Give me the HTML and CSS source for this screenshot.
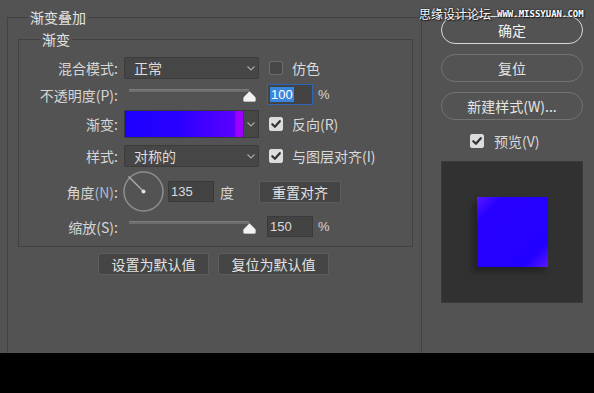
FILE: index.html
```html
<!DOCTYPE html>
<html lang="zh-CN">
<head>
<meta charset="utf-8">
<title>渐变叠加</title>
<link rel="stylesheet" href="styles.css">
</head>
<body>
<div class="dialog">
  <fieldset class="group outer">
    <legend>渐变叠加</legend>
    <fieldset class="group inner">
      <legend>渐变</legend>

      <div class="row r-blend">
        <span class="label">混合模式:</span>
        <div class="select"><span>正常</span><svg class="chev" width="8" height="5" viewBox="0 0 8 5"><polyline points="0.5,0.5 4,4 7.5,0.5"/></svg></div>
        <span class="check"></span>
        <span class="opt">仿色</span>
      </div>

      <div class="row r-opacity">
        <span class="label">不透明度(P):</span>
        <div class="slider"><span class="track"></span><svg class="thumb" width="13" height="11" viewBox="0 0 13 11"><path d="M6.5 0.5 L12 6 Q12.5 6.5 12.5 7.5 L12.5 9.5 Q12.5 10.5 11.5 10.5 L1.5 10.5 Q0.5 10.5 0.5 9.5 L0.5 7.5 Q0.5 6.5 1 6 Z"/></svg></div>
        <div class="field focus"><span class="sel">100</span></div>
        <span class="unit">%</span>
      </div>

      <div class="row r-gradient">
        <span class="label">渐变:</span>
        <div class="gradient"><span class="ramp"></span><span class="drop"><svg class="chev" width="8" height="5" viewBox="0 0 8 5"><polyline points="0.5,0.5 4,4 7.5,0.5"/></svg></span></div>
        <span class="check on"><svg width="14" height="14" viewBox="0 0 14 14"><path d="M3.3 7.2 L5.9 9.8 L10.8 4.2"/></svg></span>
        <span class="opt">反向(R)</span>
      </div>

      <div class="row r-style">
        <span class="label">样式:</span>
        <div class="select"><span>对称的</span><svg class="chev" width="8" height="5" viewBox="0 0 8 5"><polyline points="0.5,0.5 4,4 7.5,0.5"/></svg></div>
        <span class="check on"><svg width="14" height="14" viewBox="0 0 14 14"><path d="M3.3 7.2 L5.9 9.8 L10.8 4.2"/></svg></span>
        <span class="opt">与图层对齐(I)</span>
      </div>

      <div class="row r-angle">
        <span class="label">角度<span class="key">(N)</span>:</span>
        <svg class="dial" width="41" height="41" viewBox="0 0 41 41"><circle cx="20.5" cy="20.5" r="19.5"/><line x1="20.5" y1="20.5" x2="5.5" y2="5.5"/><circle class="pin" cx="20.5" cy="20.5" r="2"/></svg>
        <div class="field angle-field">135</div>
        <span class="deg">度</span>
        <button class="flat align-btn">重置对齐</button>
      </div>

      <div class="row r-scale">
        <span class="label">缩放(S):</span>
        <div class="slider"><span class="track"></span><svg class="thumb" width="13" height="11" viewBox="0 0 13 11"><path d="M6.5 0.5 L12 6 Q12.5 6.5 12.5 7.5 L12.5 9.5 Q12.5 10.5 11.5 10.5 L1.5 10.5 Q0.5 10.5 0.5 9.5 L0.5 7.5 Q0.5 6.5 1 6 Z"/></svg></div>
        <div class="field">150</div>
        <span class="unit">%</span>
      </div>
    </fieldset>

    <div class="defaults">
      <button class="flat wide">设置为默认值</button>
      <button class="flat wide">复位为默认值</button>
    </div>
  </fieldset>

  <aside class="side">
    <button class="pill primary">确定</button>
    <button class="pill">复位</button>
    <button class="pill">新建样式(W)...</button>
    <div class="preview-toggle">
      <span class="check on"><svg width="14" height="14" viewBox="0 0 14 14"><path d="M3.3 7.2 L5.9 9.8 L10.8 4.2"/></svg></span>
      <span class="opt">预览(V)</span>
    </div>
    <div class="preview"><span class="swatch"></span></div>
  </aside>

  <div class="watermark"><span class="wm-cn">思缘设计论坛</span><span class="wm-en">WWW.MISSYUAN.COM</span></div>
</div>
</body>
</html>
```

FILE: styles.css
```css
* { box-sizing: border-box; }
html, body { margin: 0; padding: 0; }
body {
  width: 594px;
  height: 393px;
  overflow: hidden;
  background: #000;
  font-family: "Noto Sans CJK SC", "Noto Sans", sans-serif;
  font-size: 14px;
  color: #d6d6d6;
}
.dialog {
  position: relative;
  display: flex;
  align-items: flex-start;
  height: 353px;
  background: #535353;
  overflow: hidden;
}

/* group boxes */
.group {
  margin: 0;
  padding: 0;
  min-width: 0;
  border: 1px solid #424242;
}
.group > legend {
  padding: 0 2px;
  height: 16px;
  line-height: 16px;
  color: #e4e4e4;
}
.outer {
  flex: none;
  width: 415px;
  height: 420px;
  margin: 9px 0 0 7px;
  padding: 0 8px 0 10px;
}
.outer > legend { margin-left: 10px; }
.inner {
  width: 395px;
  height: 216px;
  margin-top: 6px;
  padding: 9px 0 0 0;
}
.inner > legend { margin-left: 21px; }

/* rows */
.row { display: flex; align-items: center; }
.r-blend { height: 24px; }
.r-opacity { height: 29px; }
.r-gradient { height: 30px; }
.r-style { height: 34px; }
.r-angle { height: 37px; }
.r-scale { height: 33px; }
.label {
  flex: none;
  width: 99px;
  margin-right: 6px;
  text-align: right;
  white-space: nowrap;
}
.key { color: #a9bbd4; }

.select {
  flex: none;
  width: 135px;
  height: 22px;
  display: flex;
  align-items: center;
  justify-content: space-between;
  padding: 0 3px 0 9px;
  background: #464646;
  border: 1px solid #3b3b3b;
  border-radius: 2px;
  color: #dcdcdc;
}
.chev { fill: none; stroke: #a8a8a8; stroke-width: 1.2; }

.check {
  flex: none;
  width: 14px;
  height: 14px;
  margin-left: 10px;
  border-radius: 2px;
  background: #474747;
  border: 1px solid #6c6c6c;
}
.check.on { background: #dcdcdc; border-color: #dcdcdc; }
.check svg { display: block; margin: -1px; fill: none; stroke: #333; stroke-width: 2.2; stroke-linecap: round; stroke-linejoin: round; }
.opt { margin-left: 9px; white-space: nowrap; color: #dadada; }

/* sliders */
.slider {
  flex: none;
  position: relative;
  width: 135px;
  height: 14px;
}
.track {
  display: block;
  width: 120px;
  height: 3px;
  margin: 1px 0 0 5px;
  background: #6e6e6e;
  border-top: 1px solid #7c7c7c;
}
.thumb {
  position: absolute;
  left: 119px;
  top: 3px;
  fill: #f2f2f2;
  stroke: #cfcfcf;
  stroke-width: 0.6;
}

/* numeric fields */
.field {
  flex: none;
  width: 46px;
  height: 21px;
  margin-left: 8px;
  padding-left: 2px;
  display: flex;
  align-items: center;
  background: #434343;
  border: 1px solid #3a3a3a;
  font-family: "Liberation Sans", sans-serif;
  font-size: 13px;
  color: #dcdcdc;
}
.field.focus { border-color: #2f64b8; }
.sel { background: #3a86dc; color: #fff; padding: 0 1px; line-height: 15px; }
.unit { margin-left: 5px; font-family: "Liberation Sans", sans-serif; font-size: 13px; }

/* gradient picker */
.gradient {
  flex: none;
  display: flex;
  width: 135px;
  height: 28px;
  border: 1px solid #3a3a3a;
  background: #464646;
}
.ramp {
  flex: 1;
  background: linear-gradient(90deg, #1c00ff 0%, #2a00ff 45%, #5c00ff 93%, #9c00ff 94%, #9c00ff 100%);
}
.drop {
  flex: none;
  width: 15px;
  display: flex;
  align-items: center;
  justify-content: center;
  border-left: 1px solid #3a3a3a;
}

/* angle */
.dial { flex: none; margin-left: -1px; fill: none; stroke: #8e8e8e; stroke-width: 1.5; }
.dial line { stroke: #b0b0b0; stroke-width: 1.2; }
.dial .pin { fill: #e0e0e0; stroke: none; }
.angle-field { margin-left: 4px; }
.deg { margin-left: 6px; }

.flat {
  flex: none;
  height: 22px;
  padding: 0;
  background: #454545;
  border: 1px solid #5c5c5c;
  border-radius: 1px;
  color: #e2e2e2;
  font-family: inherit;
  font-size: 14px;
  line-height: 18px;
}
.align-btn { width: 82px; margin-left: 25px; }

.defaults {
  display: flex;
  gap: 9px;
  margin: 6px 0 0 80px;
}
.wide { width: 111px; }

/* right column */
.side {
  flex: none;
  width: 142px;
  margin-left: 19px;
  padding-top: 16px;
  display: flex;
  flex-direction: column;
}
.pill {
  height: 28px;
  margin-bottom: 10px;
  padding: 0;
  background: transparent;
  border: 1.5px solid #727272;
  border-radius: 14px;
  color: #e6e6e6;
  font-family: inherit;
  font-size: 14px;
}
.pill.primary { border-color: #d8d8d8; color: #f2f2f2; }
.preview-toggle {
  display: flex;
  align-items: center;
  height: 18px;
  margin-top: 2px;
  padding-left: 19px;
}
.preview-toggle .opt { margin-left: 10px; }
.preview {
  width: 142px;
  height: 142px;
  margin-top: 11px;
  display: flex;
  align-items: center;
  justify-content: center;
  background: #313131;
  border: 1px solid #3a3a3a;
}
.swatch {
  width: 71px;
  height: 70px;
  background: linear-gradient(135deg, #5a18ff 0%, #2800ff 18%, #2200ff 82%, #5a18ff 100%);
  box-shadow: -4px 5px 6px rgba(0, 0, 0, 0.3);
}

/* watermark overlay */
.watermark {
  position: absolute;
  left: 419px;
  top: 7px;
  display: flex;
  align-items: center;
  gap: 6px;
  color: #fff;
  text-shadow: 0 0 2px #000, 1px 1px 1px #222;
  white-space: nowrap;
}
.wm-cn { font-size: 12px; line-height: 14px; }
.wm-en { font-family: "DejaVu Sans Mono", monospace; font-size: 9px; font-weight: bold; line-height: 12px; }
```
